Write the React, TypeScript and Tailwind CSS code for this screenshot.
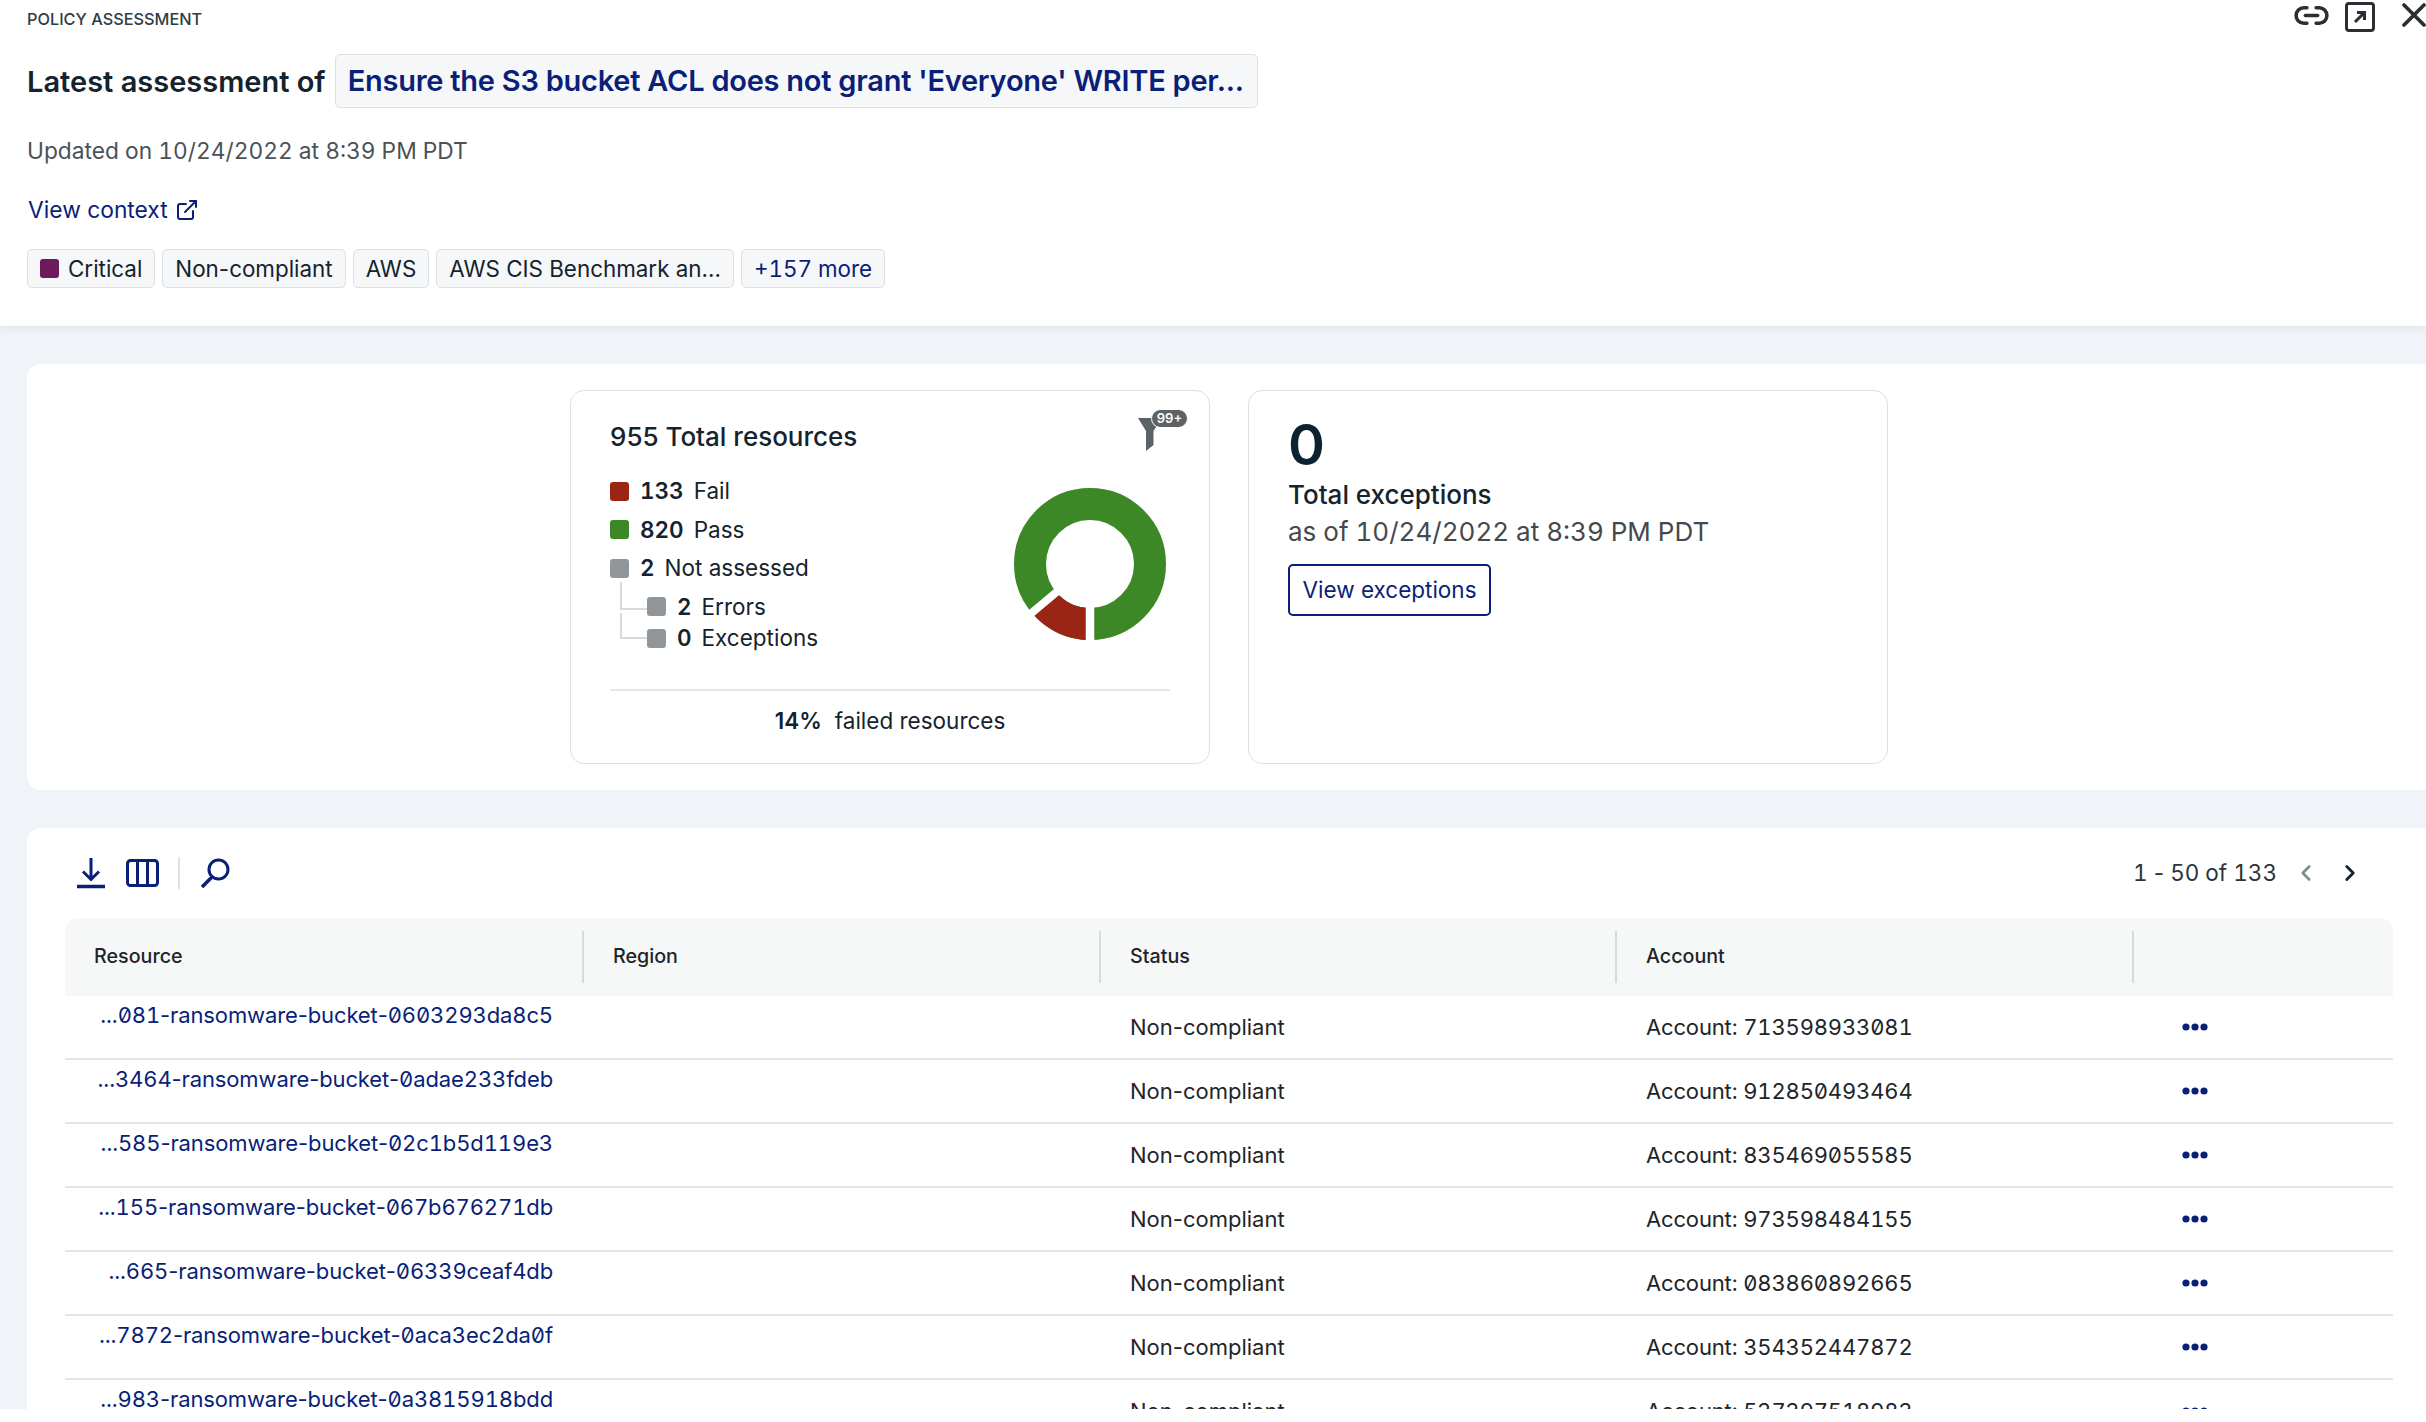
import React from 'react';
import { ChevronLeft, ChevronRight, ExternalLink, Link2, X } from 'lucide-react';

type Row = { resource: string; account: string };

const rows: Row[] = [
  { resource: '...081-ransomware-bucket-0603293da8c5', account: 'Account: 713598933081' },
  { resource: '...3464-ransomware-bucket-0adae233fdeb', account: 'Account: 912850493464' },
  { resource: '...585-ransomware-bucket-02c1b5d119e3', account: 'Account: 835469055585' },
  { resource: '...155-ransomware-bucket-067b676271db', account: 'Account: 973598484155' },
  { resource: '...665-ransomware-bucket-06339ceaf4db', account: 'Account: 083860892665' },
  { resource: '...7872-ransomware-bucket-0aca3ec2da0f', account: 'Account: 354352447872' },
  { resource: '...983-ransomware-bucket-0a3815918bdd', account: 'Account: 537397518983' }
];

// tabular figures widen the hyphen too, so hyphens stay out of them
const withPlainHyphens = (text: string) =>
  text.split('-').map((part, index) => (
    <React.Fragment key={index}>
      {index > 0 && <span className="normal-nums">-</span>}
      {part}
    </React.Fragment>
  ));

const Tag = ({ children, className = '' }: { children: React.ReactNode; className?: string }) => (
  <span className={`flex h-[39px] items-center gap-[9px] rounded-[5px] border border-[#dde0e2] bg-[#f6f7f8] px-3 text-[22.4px] text-[#14232e] ${className}`}>
    {children}
  </span>
);

const Legend = ({ color, value, label, className = '' }: { color: string; value: string; label: string; className?: string }) => (
  <div className={`flex items-center text-[22.5px] leading-none text-[#14232e] ${className}`}>
    <span className={`mr-[11px] h-[19px] w-[19px] rounded-[3px] ${color}`} />
    <b className="mr-[10px] font-semibold tabular-nums">{value}</b>
    <span>{label}</span>
  </div>
);

const SubLegend = ({ value, label, last = false }: { value: string; label: string; last?: boolean }) => (
  <div className="relative pl-[37px]">
    <span className={`absolute left-[10px] top-[-14px] w-[27px] border-b-2 border-l-2 border-[#d8dbdd] ${last ? 'h-[26px]' : 'h-[28px]'}`} />
    <Legend color="bg-[#91969a]" value={value} label={label} />
  </div>
);

const Donut = () => (
  <svg width="152" height="152" viewBox="0 0 152 152" className="shrink-0">
    <circle cx="76" cy="76" r="60" fill="none" stroke="#3c8726" strokeWidth="32" />
    <path d="M76 136 A60 60 0 0 1 30.04 114.57" fill="none" stroke="#9a2514" strokeWidth="32" />
    <line x1="76" y1="76" x2="76" y2="154" stroke="#fff" strokeWidth="8.5" />
    <line x1="76" y1="76" x2="14" y2="128" stroke="#fff" strokeWidth="8" />
  </svg>
);

export default function App() {
  return (
    <div className="h-[1422px] w-[2426px] overflow-hidden bg-white font-['Inter',sans-serif]">
      <div className="h-[1409px] overflow-hidden bg-[#f0f4f8]">
        <header className="h-[326px] bg-white pl-[27px] pr-[2px] shadow-[0_1px_8px_rgba(60,80,100,0.12)]">
          <div className="flex h-[36px] items-start justify-between">
            <p className="pt-[10px] text-[16.3px] font-medium uppercase leading-[18px] text-[#303c44]">Policy assessment</p>
            <div className="flex items-start text-[#2b2f33]">
              <Link2 size={37} strokeWidth={2.3} className="-mt-[3px]" />
              <svg width="30" height="30" viewBox="0 0 30 30" fill="none" stroke="currentColor" className="ml-[15px] mt-[2px]">
                <rect x="1.5" y="1.5" width="27" height="27" rx="2.5" strokeWidth="3" />
                <path d="M10 20 L19 11 M12 10.5 H19.5 V18" strokeWidth="3" />
              </svg>
              <X size={40} strokeWidth={2.2} className="ml-[19px] -mr-[10px] mt-[-5px]" />
            </div>
          </div>
          <div className="mt-[18px] flex items-center">
            <h1 className="text-[29px] font-semibold leading-none text-[#14232e]">Latest assessment of</h1>
            <a className="ml-[9px] flex h-[54px] w-[923px] items-center whitespace-nowrap rounded-[5px] border border-[#dde0e2] bg-[#f6f7f8] px-3 text-[29px] font-semibold tracking-[-0.24px] text-[#0a1f78]">
              Ensure the S3 bucket ACL does not grant 'Everyone' WRITE per...
            </a>
          </div>
          <p className="mt-[29px] text-[22.75px] leading-[28px] tabular-nums text-[#4a5257]">Updated on 10/24/2022 at 8:39 PM PDT</p>
          <a className="ml-[1px] mt-[31px] flex items-center gap-[7px] text-[22.8px] leading-[28px] text-[#0a1f78]">
            View context <ExternalLink size={24} strokeWidth={2} />
          </a>
          <div className="mt-[25px] flex gap-[7px]">
            <Tag><span className="h-[19px] w-[19px] rounded-[3px] bg-[#6c1a5c]" />Critical</Tag>
            <Tag>Non-compliant</Tag>
            <Tag>AWS</Tag>
            <Tag>AWS CIS Benchmark an...</Tag>
            <Tag className="tabular-nums !text-[#0a1f78]">+157 more</Tag>
          </div>
        </header>

        <section className="ml-[27px] mt-[38px] flex h-[426px] w-[2404px] justify-center gap-[38px] rounded-tl-[14px] rounded-bl-[14px] bg-white pt-[26px]">
          <div className="flex h-[374px] w-[640px] flex-col rounded-[14px] border border-[#dde0e2] px-[39px]">
            <div className="relative mt-[30px] text-[26px] font-medium leading-[32px] text-[#14232e]">
              955 Total resources
              <span className="absolute right-[-18px] top-[-12px] h-[30px] w-[37px]">
                <svg width="25" height="33" viewBox="0 0 25 33" className="absolute left-[-13px] top-[9px]" fill="#5d6266">
                  <path d="M0 0 H24 L15.5 13 V27 L8 33 V13 Z" />
                </svg>
                <span className="absolute left-0 top-0 flex h-[19px] w-[37px] items-center justify-center rounded-full border border-white bg-[#5d6266] text-[13px] font-semibold leading-none text-white">99+</span>
              </span>
            </div>
            <div className="flex justify-between">
              <div className="mt-[27px] flex flex-col">
                <Legend color="bg-[#9a2514]" value="133" label="Fail" />
                <Legend color="bg-[#3c8726]" value="820" label="Pass" className="mt-[16px]" />
                <Legend color="bg-[#91969a]" value="2" label="Not assessed" className="mt-[16px]" />
                <div className="mt-[16px] flex flex-col gap-[9px]">
                  <SubLegend value="2" label="Errors" />
                  <SubLegend value="0" label="Exceptions" last />
                </div>
              </div>
              <div className="mr-[4px] mt-[35px]"><Donut /></div>
            </div>
            <div className="mt-[39px] border-t-2 border-[#e3e5e6] pt-[16px] text-center text-[22.5px] leading-[28px] text-[#14232e]">
              <b className="mr-[13px] font-semibold">14%</b>failed resources
            </div>
          </div>

          <div className="flex h-[374px] w-[640px] flex-col items-start rounded-[14px] border border-[#dde0e2] px-[39px] pt-[24px]">
            <div className="text-[56px] font-semibold leading-[60px] text-[#0b2230]">0</div>
            <div className="mt-[4px] text-[26px] font-medium leading-[32px] text-[#14232e]">Total exceptions</div>
            <div className="mt-[5px] text-[26px] leading-[32px] tabular-nums text-[#44494d]">as of 10/24/2022 at 8:39 PM PDT</div>
            <button className="mt-[16px] flex h-[52px] w-[203px] items-center justify-center rounded-[5px] border-2 border-[#0a1f78] text-[22.5px] text-[#0a1f78]">
              View exceptions
            </button>
          </div>
        </section>

        <section className="ml-[27px] mt-[38px] h-[600px] w-[2404px] rounded-tl-[14px] bg-white px-[38px] pt-[28px]">
          <div className="flex h-[62px] items-start justify-between pr-[30px]">
            <div className="mt-[1px] flex items-center text-[#0a1f78]">
              <svg width="30" height="32" viewBox="0 0 30 32" fill="none" stroke="currentColor" strokeWidth="3" className="ml-[11px]">
                <path d="M15 1 V22 M7 14.5 L15 22.5 L23 14.5" />
                <path d="M1 29.5 H29" strokeWidth="3.5" />
              </svg>
              <svg width="33" height="28" viewBox="0 0 33 28" fill="none" stroke="currentColor" strokeWidth="3" className="ml-[20px]">
                <rect x="1.5" y="1.5" width="30" height="25" rx="3" />
                <path d="M11.5 1.5 V26.5 M21.5 1.5 V26.5" />
              </svg>
              <span className="ml-[19px] h-[32px] w-[2px] bg-[#dfe2e4]" />
              <svg width="30" height="30" viewBox="0 0 30 30" fill="none" stroke="currentColor" strokeWidth="3" className="ml-[20px]">
                <circle cx="18.5" cy="11.5" r="9.5" />
                <path d="M12 19 L2 29" strokeWidth="3.5" />
              </svg>
            </div>
            <div className="flex items-center pt-[3px] text-[22.5px] leading-[28px] tabular-nums text-[#2d3439]">
              <span>{withPlainHyphens('1 - 50 of 133')}</span>
              <ChevronLeft size={26} strokeWidth={2.4} className="ml-[16px] text-[#7f8b91]" />
              <ChevronRight size={26} strokeWidth={2.6} className="ml-[18px] text-[#14232e]" />
            </div>
          </div>

          <div className="grid h-[78px] grid-cols-[519px_517px_516px_517px_259px] items-center rounded-t-[14px] bg-[#f6f7f7] text-[19.7px] font-medium text-[#1d2529]">
            {['Resource', 'Region', 'Status', 'Account'].map((name) => (
              <div key={name} className="flex h-[52px] items-center border-r-2 border-[#d8dbdd] pl-[29px]">{name}</div>
            ))}
            <div />
          </div>

          {rows.map((row) => (
            <div key={row.account} className="grid h-[64px] grid-cols-[519px_517px_516px_517px_259px] border-b-2 border-[#e3e5e6] text-[22px]">
              <div className="whitespace-nowrap pr-[31px] pt-[4px] text-right leading-[30px] tracking-[-0.12px] tabular-nums slashed-zero text-[#0a1f78]">{withPlainHyphens(row.resource)}</div>
              <div />
              <div className="flex items-center pl-[29px] text-[#1d2529]">Non-compliant</div>
              <div className="flex items-center whitespace-nowrap pl-[29px] tracking-[-0.15px] tabular-nums slashed-zero text-[#1d2529]">{row.account}</div>
              <div className="flex items-center pl-[48px] text-[#0a1f78]">
                <svg width="26" height="8" viewBox="0 0 26 8" fill="currentColor">
                  <circle cx="4" cy="4" r="3.6" /><circle cx="13" cy="4" r="3.6" /><circle cx="22" cy="4" r="3.6" />
                </svg>
              </div>
            </div>
          ))}
        </section>
      </div>
    </div>
  );
}
